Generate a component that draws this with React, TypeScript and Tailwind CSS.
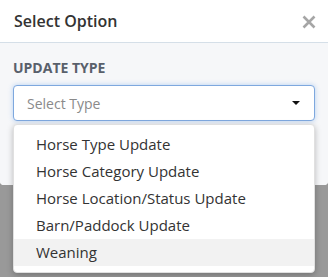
import React from "react";

const items = [
  "Horse Type Update",
  "Horse Category Update",
  "Horse Location/Status Update",
  "Barn/Paddock Update",
  "Weaning",
];

export default function App() {
  return (
    <div className="relative w-[328px] h-[277px] overflow-hidden bg-[#999999] font-['Open_Sans',sans-serif]">
      <div className="w-[328px] rounded-b-[4px] bg-white">
        <div className="flex h-[43px] items-center justify-between border-b border-[#d5dfe8] pl-[14px] pr-[12px]">
          <span className="text-[16px] font-semibold leading-none text-[#333333]">Select Option</span>
          <svg width="14" height="14" viewBox="0 0 14 14" className="mt-[1px]">
            <path d="M1.5 1.5 L12.5 12.5 M12.5 1.5 L1.5 12.5" stroke="#a6a6a6" strokeWidth="2.6" strokeLinecap="butt" />
          </svg>
        </div>
        <div className="h-[142px] rounded-b-[4px] bg-[#f6f7f9] px-[13px] pt-[15px]">
          <div className="text-[14px] font-bold uppercase leading-[20px] text-[#59606b]">Update Type</div>
          <div className="relative mt-[7px]">
            <div className="flex h-[36px] items-center justify-between rounded-[4px] border border-[#7ea8de] bg-white pl-[13px] pr-[14px] shadow-[0_0_5px_rgba(102,160,233,0.45)]">
              <span className="text-[14px] text-[#8a8a8a]">Select Type</span>
              <svg width="8" height="4" viewBox="0 0 8 4">
                <path d="M0 0 L8 0 L4 4 Z" fill="#111111" />
              </svg>
            </div>
            <div className="absolute left-0 right-0 top-[39px] z-10 rounded-[4px] border border-[#e0e0e0] bg-white py-[6px] shadow-[0_2px_6px_rgba(0,0,0,0.25)]">
              {items.map((it) => (
                <div
                  key={it}
                  className={`flex h-[27px] items-center pl-[22px] text-[15px] text-[#333333] ${it === "Weaning" ? "bg-[#f2f2f2]" : ""}`}
                >
                  {it}
                </div>
              ))}
            </div>
          </div>
        </div>
      </div>
    </div>
  );
}
